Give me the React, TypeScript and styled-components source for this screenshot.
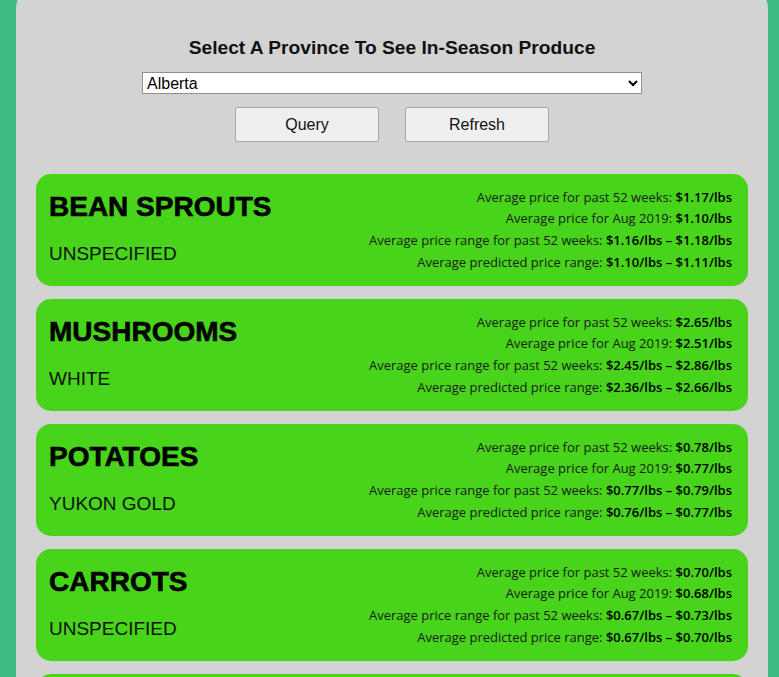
import React from "react";
import styled, { createGlobalStyle } from "styled-components";

const GlobalStyle = createGlobalStyle`
  html, body { margin: 0; padding: 0; }
  body { background: #3dba84; }
`;

const Page = styled.div`
  height: 100vh;
  overflow: hidden;
  padding: 0 11px 0 16px;
  box-sizing: border-box;
`;

const Panel = styled.main`
  width: 752px;
  margin-top: -12px;
  background: #d3d3d3;
  border-radius: 20px;
  padding: 49px 0 20px;
  box-sizing: border-box;
  display: flex;
  flex-direction: column;
  align-items: center;
`;

const Heading = styled.h1`
  margin: 0;
  font-family: "Liberation Sans", Arial, sans-serif;
  font-weight: bold;
  font-size: 19.2px;
  line-height: 21px;
  color: #111;
`;

const ProvinceSelect = styled.select`
  margin-top: 14px;
  width: 500px;
  height: 22px;
  font-family: "Liberation Sans", Arial, sans-serif;
  font-size: 16px;
  color: #000;
  background: #fff;
  border: 1px solid #8f8f8f;
  border-radius: 0;
  padding: 0;
`;

const ButtonRow = styled.div`
  margin-top: 13px;
  display: flex;
  gap: 26px;
`;

const Button = styled.button`
  width: 144px;
  height: 35px;
  font-family: "Liberation Sans", Arial, sans-serif;
  font-size: 16px;
  color: #111;
  background: #efefef;
  border: 1px solid #a6a6a6;
  border-radius: 2px;
`;

const CardList = styled.section`
  margin-top: 32px;
  align-self: stretch;
  padding: 0 20px;
  display: flex;
  flex-direction: column;
  gap: 13px;
`;

const Card = styled.article`
  height: 112px;
  flex-shrink: 0;
  background: #47d41b;
  border-radius: 15px;
  padding: 0 16px 0 13px;
  display: flex;
  align-items: center;
  justify-content: space-between;
  box-sizing: border-box;
`;

const NameBlock = styled.div`
  display: flex;
  flex-direction: column;
  padding-bottom: 4px;
`;

const Name = styled.h2`
  margin: 0;
  font-family: "Liberation Sans", Arial, sans-serif;
  font-weight: bold;
  font-size: 28px;
  line-height: 32px;
  color: #000;
  -webkit-text-stroke: 0.6px #000;
`;

const Variety = styled.div`
  margin-top: 20px;
  font-family: "Liberation Sans", Arial, sans-serif;
  font-size: 19px;
  line-height: 22px;
  color: #111;
`;

const Stats = styled.div`
  text-align: right;
  font-family: "Open Sans", sans-serif;
  font-size: 13px;
  line-height: 21.6px;
  color: #1a1a1a;
`;

const Value = styled.b`
  font-weight: 600;
  color: #000;
`;

type Item = {
  name: string;
  variety: string;
  avg: string;
  month: string;
  range: [string, string];
  predicted: [string, string];
};

const items: Item[] = [
  { name: "BEAN SPROUTS", variety: "UNSPECIFIED", avg: "$1.17", month: "$1.10", range: ["$1.16", "$1.18"], predicted: ["$1.10", "$1.11"] },
  { name: "MUSHROOMS", variety: "WHITE", avg: "$2.65", month: "$2.51", range: ["$2.45", "$2.86"], predicted: ["$2.36", "$2.66"] },
  { name: "POTATOES", variety: "YUKON GOLD", avg: "$0.78", month: "$0.77", range: ["$0.77", "$0.79"], predicted: ["$0.76", "$0.77"] },
  { name: "CARROTS", variety: "UNSPECIFIED", avg: "$0.70", month: "$0.68", range: ["$0.67", "$0.73"], predicted: ["$0.67", "$0.70"] },
  { name: "APPLES", variety: "GALA", avg: "$1.52", month: "$1.48", range: ["$1.45", "$1.60"], predicted: ["$1.47", "$1.55"] },
];

export default function App() {
  return (
    <>
      <GlobalStyle />
      <Page>
        <Panel>
          <Heading>Select A Province To See In-Season Produce</Heading>
          <ProvinceSelect defaultValue="Alberta">
            <option>Alberta</option>
            <option>British Columbia</option>
            <option>Manitoba</option>
            <option>Ontario</option>
            <option>Quebec</option>
          </ProvinceSelect>
          <ButtonRow>
            <Button>Query</Button>
            <Button>Refresh</Button>
          </ButtonRow>
          <CardList>
            {items.map((it) => (
              <Card key={it.name}>
                <NameBlock>
                  <Name>{it.name}</Name>
                  <Variety>{it.variety}</Variety>
                </NameBlock>
                <Stats>
                  <div>Average price for past 52 weeks: <Value>{it.avg}/lbs</Value></div>
                  <div>Average price for Aug 2019: <Value>{it.month}/lbs</Value></div>
                  <div>
                    Average price range for past 52 weeks: <Value>{it.range[0]}/lbs – {it.range[1]}/lbs</Value>
                  </div>
                  <div>
                    Average predicted price range: <Value>{it.predicted[0]}/lbs – {it.predicted[1]}/lbs</Value>
                  </div>
                </Stats>
              </Card>
            ))}
          </CardList>
        </Panel>
      </Page>
    </>
  );
}
